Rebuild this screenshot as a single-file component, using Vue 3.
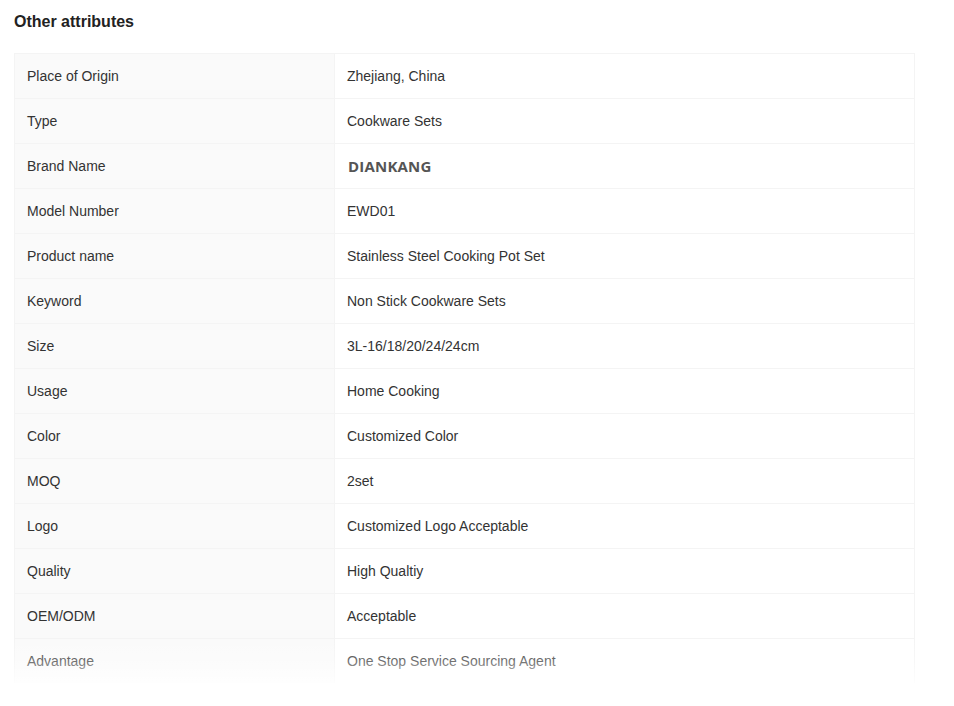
<script setup>
const rows = [
  ['Place of Origin', 'Zhejiang, China'],
  ['Type', 'Cookware Sets'],
  ['Brand Name', 'DIANKANG'],
  ['Model Number', 'EWD01'],
  ['Product name', 'Stainless Steel Cooking Pot Set'],
  ['Keyword', 'Non Stick Cookware Sets'],
  ['Size', '3L-16/18/20/24/24cm'],
  ['Usage', 'Home Cooking'],
  ['Color', 'Customized Color'],
  ['MOQ', '2set'],
  ['Logo', 'Customized Logo Acceptable'],
  ['Quality', 'High Qualtiy'],
  ['OEM/ODM', 'Acceptable'],
  ['Advantage', 'One Stop Service Sourcing Agent'],
]
</script>

<template>
  <main class="page">
    <h2 class="title">Other attributes</h2>
    <div class="wrap">
      <div class="table">
        <div v-for="r in rows" :key="r[0]" class="row">
          <div class="key">{{ r[0] }}</div>
          <div class="val">
            <span v-if="r[0] === 'Brand Name'" class="brand">{{ r[1] }}</span>
            <template v-else>{{ r[1] }}</template>
          </div>
        </div>
      </div>
      <div class="fade"></div>
    </div>
  </main>
</template>

<style>
html, body { margin: 0; background: #fff; }
</style>

<style scoped>
.page {
  width: 954px;
  height: 706px;
  box-sizing: border-box;
  padding: 13px 0 0 14px;
  font-family: "Liberation Sans", Arial, sans-serif;
  color: #333;
  overflow: hidden;
}
.title {
  margin: 0 0 22px;
  font-size: 16px;
  line-height: 18px;
  font-weight: 700;
  color: #222;
}
.wrap {
  position: relative;
  width: 901px;
  height: 630px;
  overflow: hidden;
}
.table {
  border: 1px solid #f4f4f4;
  border-bottom: 0;
  box-sizing: border-box;
}
.row {
  display: flex;
  height: 45px;
  box-sizing: border-box;
  border-bottom: 1px solid #f4f4f4;
  font-size: 14px;
  line-height: 44px;
}
.key {
  width: 320px;
  box-sizing: border-box;
  padding-left: 12px;
  background: #fafafa;
  border-right: 1px solid #f4f4f4;
}
.val {
  flex: 1;
  padding-left: 12px;
}
.brand {
  display: inline-block;
  padding-left: 1px;
  font-family: "Open Sans", sans-serif;
  font-weight: 700;
  font-size: 15px;
  letter-spacing: 0.2px;
  color: #555;
}
.fade {
  position: absolute;
  left: 0;
  right: 0;
  bottom: 0;
  height: 44px;
  background: linear-gradient(to bottom, rgba(255,255,255,0), rgba(255,255,255,0.3) 50%, rgba(255,255,255,0.85));
}
</style>
